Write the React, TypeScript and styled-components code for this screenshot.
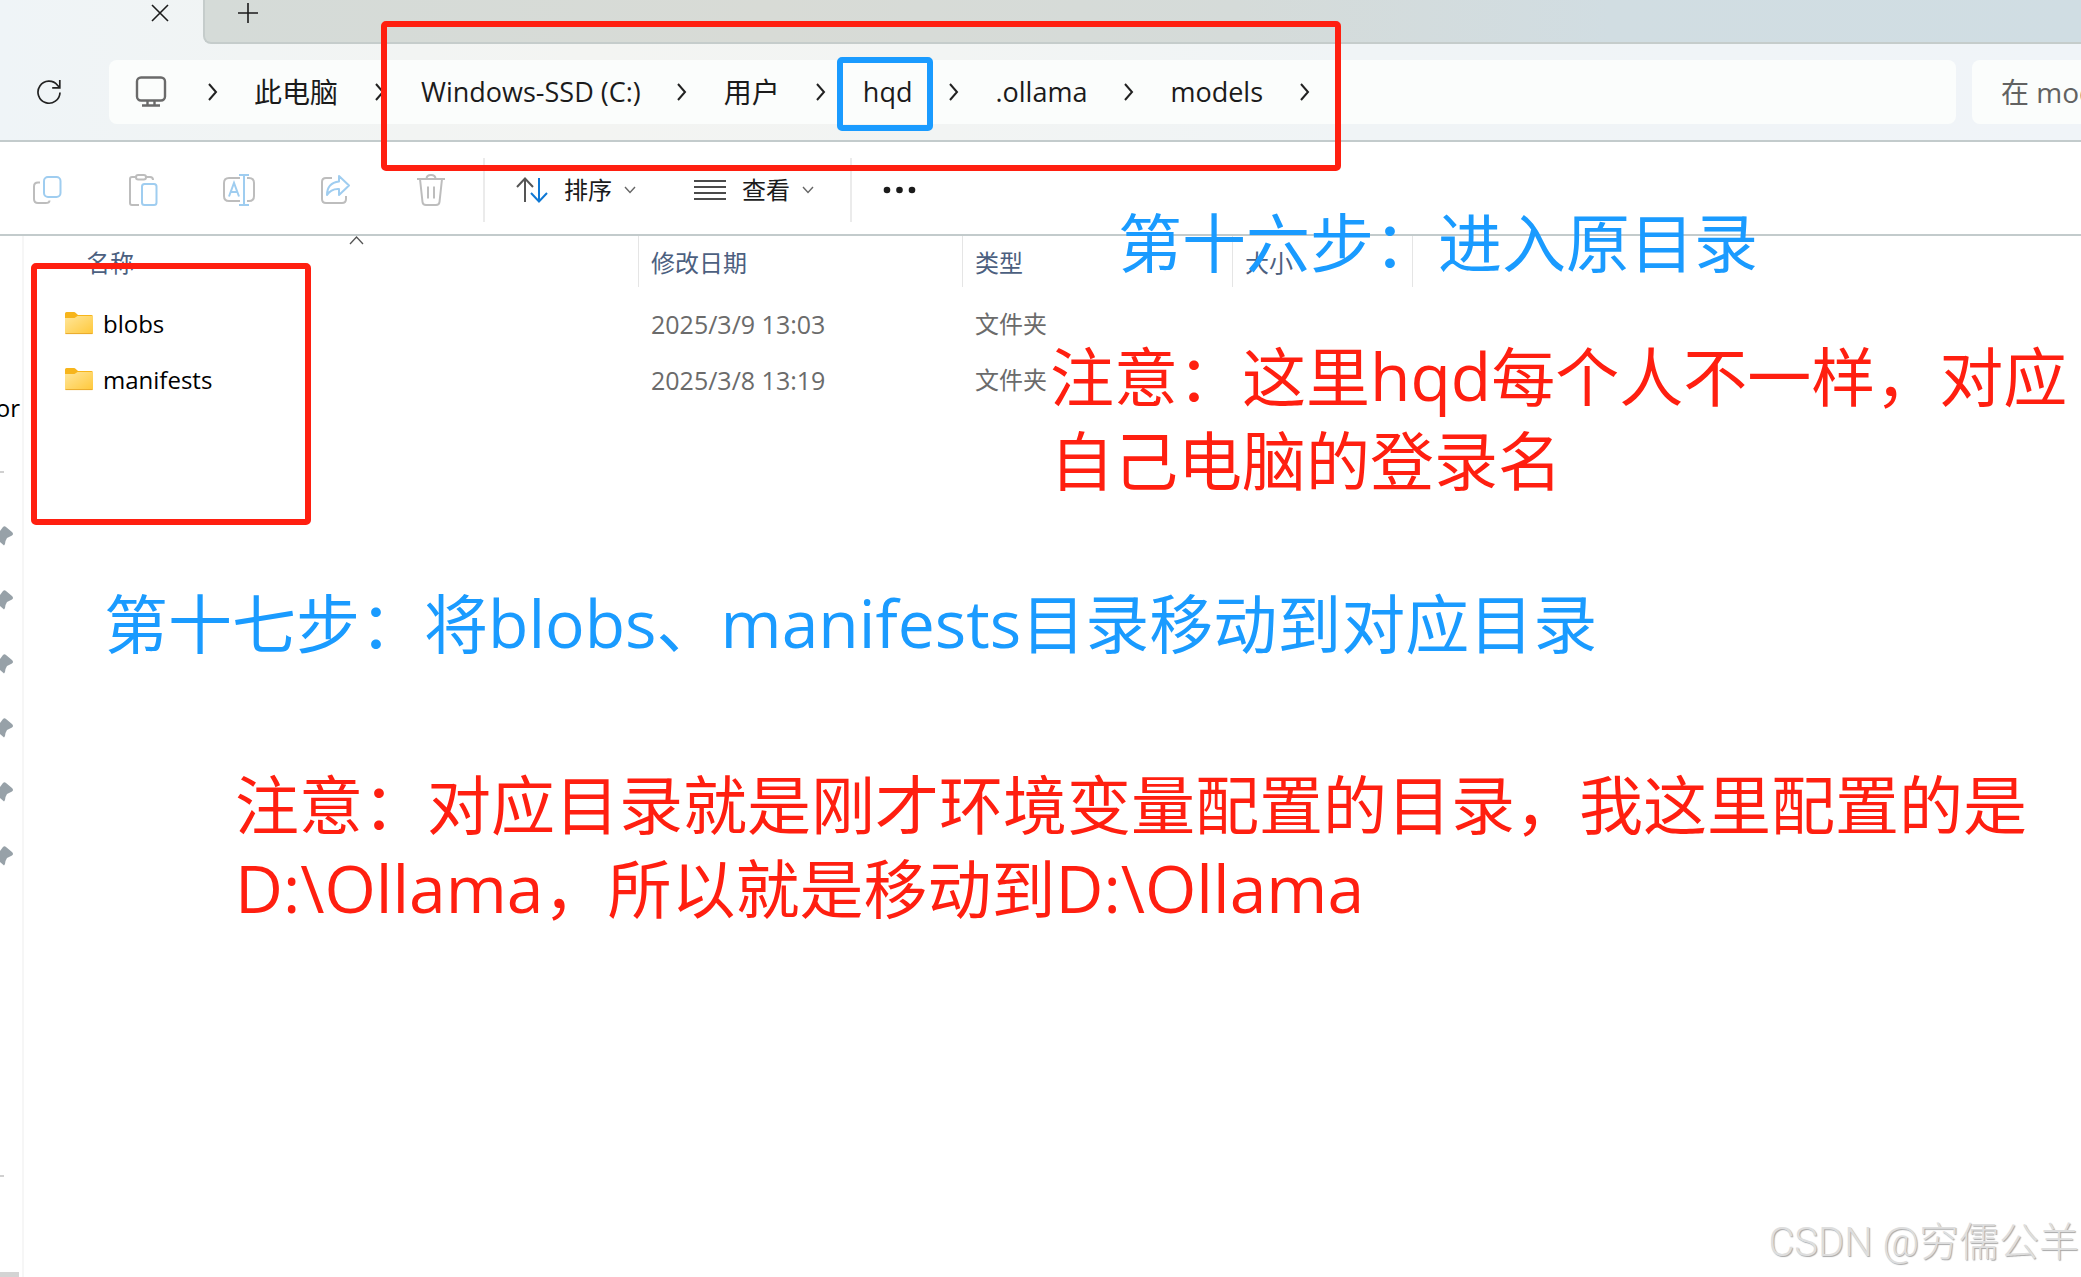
import React from "react";
import styled, { createGlobalStyle } from "styled-components";

const RED = "#ff1f10";
const BLUE = "#1a9bff";

const GlobalStyle = createGlobalStyle`
  * { box-sizing: border-box; }
  body {
    margin: 0;
    background: #fff;
    color: #1b1b1b;
    font-family: "Open Sans", "Noto Sans CJK SC", sans-serif;
    font-size: 24px;
  }
  button, input {
    margin: 0;
    padding: 0;
    border: 0;
    background: none;
    color: inherit;
    font: inherit;
  }
`;

const Window = styled.div`
  position: relative;
  display: flex;
  flex-direction: column;
  min-height: 100vh;
  overflow: hidden;
`;

const Chrome = styled.header`
  background: linear-gradient(90deg, #eff4f7 0%, #f1f4f4 12%, #f3f4f2 28%, #f2f4f3 45%, #f0f4f6 65%, #f0f4f8 100%);
  border-bottom: 2px solid #c3cbcc;
`;

const TabStrip = styled.div`
  display: flex;
  height: 44px;
`;

const ActiveTab = styled.div`
  flex: 0 0 203px;
  display: flex;
  justify-content: flex-end;
  padding-right: 32px;
`;

const TabRest = styled.div`
  flex: 1;
  padding-left: 32px;
  border: solid #c5cccb;
  border-width: 0 0 2px 2px;
  border-bottom-left-radius: 8px;
  background: linear-gradient(90deg, #d5dbd8 0%, #d8dbd6 30%, #d5dbd9 55%, #d1dde2 75%, #d0dde3 100%);
`;

const TabButton = styled.button`
  display: flex;
  width: 22px;
  height: 25px;
  align-items: center;
  justify-content: center;
`;

const NavRow = styled.div`
  display: flex;
  align-items: center;
  height: 96px;
`;

const RefreshButton = styled.button`
  flex: 0 0 109px;
  display: flex;
  padding-left: 36px;
`;

const AddressBar = styled.nav`
  flex: 1;
  display: flex;
  align-items: center;
  height: 64px;
  margin-right: 16px;
  border-radius: 8px;
  background: #fbfdfc;
  white-space: nowrap;
`;

const DeviceButton = styled.button`
  flex: 0 0 62px;
  display: flex;
  padding-left: 26px;
`;

const Crumb = styled.button<{ $cjk?: boolean }>`
  font-size: ${(p) => (p.$cjk ? 28 : 27)}px;
  line-height: 40px;
`;

const CrumbArrow = styled.span`
  flex: 0 0 83px;
  display: flex;
  justify-content: center;
`;

const SearchBox = styled.label`
  flex: 0 0 109px;
  height: 64px;
  overflow: hidden;
  border-radius: 8px 0 0 8px;
  background: #fbfdfc;
`;

const SearchInput = styled.input`
  width: 100%;
  height: 100%;
  padding-left: 29px;
  font-size: 28px;
  outline: 0;
  &::placeholder { color: #626262; opacity: 1; }
`;

const Toolbar = styled.div`
  display: flex;
  align-items: center;
  height: 94px;
  padding-top: 3px;
  border-bottom: 2px solid #c3cbcc;
`;

const ToolButton = styled.button`
  flex: 0 0 96px;
  display: flex;
  justify-content: center;
  padding-right: 2px;
`;

const Divider = styled.span`
  width: 2px;
  height: 64px;
  background: #ebebeb;
`;

const MenuButton = styled.button`
  flex: 0 0 178px;
  display: flex;
  align-items: center;
  gap: 16px;
  line-height: 36px;
  svg:last-child { margin-left: -4px; }
`;

const MenuGroup = styled.div`
  display: flex;
  width: 365px;
  padding-left: 31px;
`;

const MoreButton = styled.button`
  display: flex;
  padding-left: 31px;
`;

const Main = styled.div`
  flex: 1;
  display: flex;
`;

const Sidebar = styled.aside`
  flex: 0 0 24px;
  display: flex;
  flex-direction: column;
  overflow: hidden;
  padding-top: 154px;
  border-right: 2px solid #f6f6f6;
`;

const SideLabel = styled.span`
  display: flex;
  justify-content: flex-end;
  width: 20px;
  line-height: 36px;
  color: #000;
`;

const SideRule = styled.span`
  flex: 0 0 2px;
  width: 4px;
  background: #d0d0d0;
`;

const PinList = styled.div`
  display: flex;
  flex-direction: column;
  padding: 31px 0 287px;
`;

const Pin = styled.span`
  display: flex;
  align-items: center;
  height: 64px;
`;

const Spacer = styled.span<{ $size: number }>`
  flex: 0 0 ${(p) => p.$size}px;
`;

const ScrollThumb = styled.span`
  height: 5px;
  width: 19px;
  margin-top: auto;
  background: #d4d4d4;
`;

const FileArea = styled.main`
  flex: 1;
`;

const FileTable = styled.table`
  table-layout: fixed;
  width: 1389px;
  border-collapse: separate;
  border-spacing: 0;
  text-align: left;
`;

const HeadCell = styled.th<{ $w: number; $first?: boolean }>`
  position: relative;
  width: ${(p) => p.$w}px;
  height: 51px;
  padding: 2px 0 0 ${(p) => (p.$first ? 62 : 12)}px;
  border-right: 1px solid #e5e5e5;
  color: #4c607f;
  font-weight: 400;
  line-height: 36px;
`;

const SortMark = styled.svg`
  position: absolute;
  top: 0;
  left: 325px;
`;

const Cell = styled.td`
  height: 56px;
  padding: 0 0 0 12px;
  color: #6b6b6b;
  line-height: 36px;
`;

const DateCell = styled(Cell)`
  font-size: 25px;
`;

const NameCell = styled(Cell)`
  padding-left: 41px;
  color: #000;
`;

const FileName = styled.span`
  display: flex;
  align-items: center;
  gap: 10px;
`;

const HeadGap = styled.tr`
  height: 9px;
`;

const Frame = styled.div<{ $x: number; $y: number; $w: number; $h: number; $color: string }>`
  position: absolute;
  left: ${(p) => p.$x}px;
  top: ${(p) => p.$y}px;
  width: ${(p) => p.$w}px;
  height: ${(p) => p.$h}px;
  border: 6px solid ${(p) => p.$color};
  border-radius: 5px;
  pointer-events: none;
`;

const Note = styled.p<{ $x: number; $y: number; $color: string }>`
  position: absolute;
  left: ${(p) => p.$x}px;
  top: ${(p) => p.$y}px;
  margin: 0;
  color: ${(p) => p.$color};
  font-size: 64px;
  line-height: 84px;
  white-space: nowrap;
  pointer-events: none;
`;

const NoteLatin = styled.span`
  font-size: 66px;
  line-height: 1;
`;

const Watermark = styled.div`
  position: absolute;
  right: 2px;
  bottom: 6px;
  color: #dedede;
  font-family: Roboto, "Noto Sans CJK SC", sans-serif;
  font-size: 40px;
  font-weight: 300;
  line-height: 56px;
  text-shadow: 1px 1px 1px #a8a8a8;
  white-space: nowrap;
`;

const ChevronRight = () => (
  <svg width="12" height="18" viewBox="0 0 12 18" fill="none" stroke="#222" strokeWidth="2">
    <path d="M2 1l7 8-7 8" />
  </svg>
);

const ChevronDown = () => (
  <svg width="12" height="8" viewBox="0 0 12 8" fill="none" stroke="#666" strokeWidth="1.4">
    <path d="M1 1l5 5.5L11 1" />
  </svg>
);

const FolderIcon = () => (
  <svg width="28" height="24" viewBox="0 0 28 24">
    <defs>
      <linearGradient id="folder" x1="0" y1="0" x2="1" y2="1">
        <stop offset="0" stopColor="#ffe69a" />
        <stop offset="1" stopColor="#ffc83a" />
      </linearGradient>
    </defs>
    <path d="M0 1.500q0-1.500 1.500-1.500H9q1 0 1.800.9L13 3h13.500q1.500 0 1.500 1.500v4H0z" fill="#f7b51b" />
    <path d="M0 6h9.500L12.500 4H28V21q0 1-1 1H1q-1 0-1-1z" fill="url(#folder)" />
    <path d="M.5 21.600h27" stroke="#e9a92a" strokeWidth="1" />
  </svg>
);

const PinIcon = () => (
  <svg width="14" height="20" viewBox="0 0 14 20">
    <path d="M0 5L3 1Q4.500-.300 6 1L12 6Q14 8 12 9.500L7 12Q5.500 14 5 18L4 19.500L0 16z" fill="#97a1a8" />
  </svg>
);

const crumbs: { label: string; cjk?: boolean }[] = [
  { label: "此电脑", cjk: true },
  { label: "Windows-SSD (C:)" },
  { label: "用户", cjk: true },
  { label: "hqd" },
  { label: ".ollama" },
  { label: "models" },
];

const files = [
  { name: "blobs", date: "2025/3/9 13:03", type: "文件夹" },
  { name: "manifests", date: "2025/3/8 13:19", type: "文件夹" },
];

const GREY = "#bdbdbd";
const SKY = "#9fcdf0";

export default function App() {
  return (
    <>
      <GlobalStyle />
      <Window lang="zh-CN">
        <Chrome>
          <TabStrip>
            <ActiveTab>
              <TabButton aria-label="关闭标签页">
                <svg width="18" height="18" viewBox="0 0 18 18" stroke="#1b1b1b" strokeWidth="1.6">
                  <path d="M1 1l16 16M17 1L1 17" />
                </svg>
              </TabButton>
            </ActiveTab>
            <TabRest>
              <TabButton aria-label="新建标签页">
                <svg width="20" height="20" viewBox="0 0 20 20" stroke="#1b1b1b" strokeWidth="1.6">
                  <path d="M10 0v20M0 10h20" />
                </svg>
              </TabButton>
            </TabRest>
          </TabStrip>
          <NavRow>
            <RefreshButton aria-label="刷新">
              <svg width="26" height="26" viewBox="0 0 26 26" fill="none" stroke="#222" strokeWidth="1.7">
                <path d="M24 13.500A11 11 0 1 1 21.500 6.200L23.500 8.500" />
                <path d="M23.800 1v7.800h-7.600" />
              </svg>
            </RefreshButton>
            <AddressBar aria-label="地址栏">
              <DeviceButton aria-label="此设备">
                <svg width="32" height="32" viewBox="0 0 32 32" fill="none" stroke="#6a6a6a" strokeWidth="2.400">
                  <rect x="2" y="1.500" width="28" height="23" rx="4" />
                  <path d="M12.500 24.500v5M19.500 24.500v5M7 29.500h18" />
                </svg>
              </DeviceButton>
              <CrumbArrow><ChevronRight /></CrumbArrow>
              {crumbs.map((c) => (
                <React.Fragment key={c.label}>
                  <Crumb $cjk={c.cjk}>{c.label}</Crumb>
                  <CrumbArrow><ChevronRight /></CrumbArrow>
                </React.Fragment>
              ))}
            </AddressBar>
            <SearchBox>
              <SearchInput aria-label="搜索" placeholder="在 models 中搜索" />
            </SearchBox>
          </NavRow>
        </Chrome>

        <Toolbar>
          <ToolButton aria-label="复制">
            <svg width="32" height="32" viewBox="0 0 32 32" fill="none" strokeWidth="2">
              <path d="M9 8.500H7q-4 0-4 4V25q0 4 4 4h7.500q4 0 4-2.500" stroke={GREY} />
              <rect x="13" y="3" width="16.500" height="20" rx="4" stroke={SKY} />
            </svg>
          </ToolButton>
          <ToolButton aria-label="粘贴">
            <svg width="32" height="34" viewBox="0 0 32 34" fill="none" strokeWidth="2">
              <path d="M9 4H5Q3 4 3 6v24q0 2 2 2h7M19 4h4q3 0 3 3" stroke={GREY} />
              <rect x="9" y="2" width="10" height="4.500" rx="2.200" stroke={GREY} />
              <rect x="15" y="11" width="14.500" height="21" rx="2.500" stroke={SKY} />
            </svg>
          </ToolButton>
          <ToolButton aria-label="重命名">
            <svg width="34" height="34" viewBox="0 0 34 34" fill="none" strokeWidth="2">
              <path d="M18 5H7Q2 5 2 10v13q0 5 5 5h11M25 5h2q5 0 5 5v13q0 5-5 5h-2" stroke={GREY} />
              <path d="M17 2h10M17 32h10M22 2v30M7 23.500L12 10l5 13.500M8.500 19h7" stroke={SKY} />
            </svg>
          </ToolButton>
          <ToolButton aria-label="共享">
            <svg width="32" height="32" viewBox="0 0 32 32" fill="none" strokeWidth="2" strokeLinejoin="round">
              <path d="M13 4H7Q3 4 3 8v17q0 4 4 4h16q4 0 4-4v-3" stroke={GREY} />
              <path d="M20 2l10 9.500L20 21v-6q-8-.500-12 6Q8 9 20 7.500z" stroke={SKY} />
            </svg>
          </ToolButton>
          <ToolButton aria-label="删除">
            <svg width="32" height="34" viewBox="0 0 32 34" fill="none" stroke={GREY} strokeWidth="2">
              <path d="M2 6h28M11.500 6q0-4 4.500-4t4.500 4M5 6l2.500 23q.300 3 3.500 3h10q3.200 0 3.500-3L27 6M13 13.500v12M19 13.500v12" />
            </svg>
          </ToolButton>
          <Spacer $size={3} />
          <Divider />
          <MenuGroup>
            <MenuButton>
              <svg width="32" height="26" viewBox="0 0 32 26" fill="none" strokeWidth="2">
                <path d="M9 25V2M1 10l8-8.500L17 10" stroke="#555" />
                <path d="M23 1v23M15 16l8 8.500 8-8.500" stroke="#0f78d4" />
              </svg>
              排序
              <ChevronDown />
            </MenuButton>
            <MenuButton>
              <svg width="32" height="22" viewBox="0 0 32 22" stroke="#4a4a4a" strokeWidth="2">
                <path d="M0 2h32M0 8h32M0 14h32M0 20h32" />
              </svg>
              查看
              <ChevronDown />
            </MenuButton>
          </MenuGroup>
          <Divider />
          <MoreButton aria-label="更多">
            <svg width="34" height="8" viewBox="0 0 34 8" fill="#1b1b1b">
              <circle cx="4" cy="4" r="3.300" />
              <circle cx="16.500" cy="4" r="3.300" />
              <circle cx="29" cy="4" r="3.300" />
            </svg>
          </MoreButton>
        </Toolbar>

        <Main>
          <Sidebar>
            <SideLabel>or</SideLabel>
            <Spacer $size={45} />
            <SideRule />
            <PinList>
              {[0, 1, 2, 3, 4, 5].map((i) => (
                <Pin key={i}><PinIcon /></Pin>
              ))}
            </PinList>
            <SideRule />
            <ScrollThumb />
          </Sidebar>
          <FileArea>
            <FileTable>
              <thead>
                <tr>
                  <HeadCell $w={615} $first>
                    名称
                    <SortMark width="15" height="9" viewBox="0 0 15 9" fill="none" stroke="#555" strokeWidth="1.300">
                      <path d="M1 8l6.500-7L14 8" />
                    </SortMark>
                  </HeadCell>
                  <HeadCell $w={324}>修改日期</HeadCell>
                  <HeadCell $w={270}>类型</HeadCell>
                  <HeadCell $w={180}>大小</HeadCell>
                </tr>
              </thead>
              <tbody>
                <HeadGap aria-hidden="true" />
                {files.map((f) => (
                  <tr key={f.name}>
                    <NameCell>
                      <FileName>
                        <FolderIcon />
                        {f.name}
                      </FileName>
                    </NameCell>
                    <DateCell>{f.date}</DateCell>
                    <Cell>{f.type}</Cell>
                    <Cell />
                  </tr>
                ))}
              </tbody>
            </FileTable>
          </FileArea>
        </Main>

        <Frame $x={381} $y={21} $w={960} $h={150} $color={RED} />
        <Frame $x={837} $y={57} $w={96} $h={74} $color={BLUE} />
        <Frame $x={31} $y={263} $w={280} $h={262} $color={RED} />

        <Note $x={1118} $y={201} $color={BLUE}>第十六步：进入原目录</Note>
        <Note $x={1050} $y={335} $color={RED}>
          注意：这里<NoteLatin>hqd</NoteLatin>每个人不一样，对应<br />自己电脑的登录名
        </Note>
        <Note $x={104} $y={582} $color={BLUE}>
          第十七步：将<NoteLatin>blobs</NoteLatin>、<NoteLatin>manifests</NoteLatin>目录移动到对应目录
        </Note>
        <Note $x={235} $y={763} $color={RED}>
          注意：对应目录就是刚才环境变量配置的目录，我这里配置的是<br />
          <NoteLatin>D:\Ollama</NoteLatin>，所以就是移动到<NoteLatin>D:\Ollama</NoteLatin>
        </Note>

        <Watermark>CSDN @穷儒公羊</Watermark>
      </Window>
    </>
  );
}
